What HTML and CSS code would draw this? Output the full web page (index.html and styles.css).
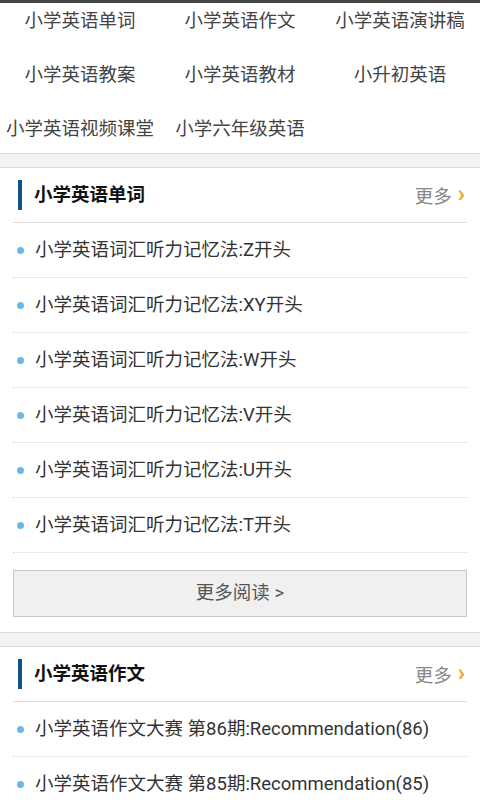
FILE: index.html
```html
<!DOCTYPE html>
<html lang="zh-CN">
<head>
<meta charset="utf-8">
<title>小学英语</title>
<link rel="stylesheet" href="styles.css">
</head>
<body>
<div class="page">
  <nav class="nav">
    <a class="nav-item">小学英语单词</a>
    <a class="nav-item">小学英语作文</a>
    <a class="nav-item">小学英语演讲稿</a>
    <a class="nav-item">小学英语教案</a>
    <a class="nav-item">小学英语教材</a>
    <a class="nav-item">小升初英语</a>
    <a class="nav-item">小学英语视频课堂</a>
    <a class="nav-item">小学六年级英语</a>
  </nav>
  <div class="band"></div>
  <section class="section">
    <div class="sec-head">
      <h2 class="sec-title">小学英语单词</h2>
      <a class="more">更多<span class="chev">›</span></a>
    </div>
    <ul class="list">
      <li class="item">小学英语词汇听力记忆法:Z开头</li>
      <li class="item">小学英语词汇听力记忆法:XY开头</li>
      <li class="item">小学英语词汇听力记忆法:W开头</li>
      <li class="item">小学英语词汇听力记忆法:V开头</li>
      <li class="item">小学英语词汇听力记忆法:U开头</li>
      <li class="item">小学英语词汇听力记忆法:T开头</li>
    </ul>
    <div class="btn">更多阅读 &gt;</div>
  </section>
  <div class="band"></div>
  <section class="section">
    <div class="sec-head">
      <h2 class="sec-title">小学英语作文</h2>
      <a class="more">更多<span class="chev">›</span></a>
    </div>
    <ul class="list">
      <li class="item">小学英语作文大赛 第86期:Recommendation(86)</li>
      <li class="item">小学英语作文大赛 第85期:Recommendation(85)</li>
    </ul>
  </section>
</div>
</body>
</html>
```

FILE: styles.css
```css
html, body {
  margin: 0;
  padding: 0;
  background: #fff;
}
body {
  font-family: Roboto, "Noto Sans CJK SC", sans-serif;
  color: #333;
  overflow: hidden;
}
.page {
  border-top: 3px solid #444;
}
.nav {
  display: grid;
  grid-template-columns: repeat(3, 160px);
  grid-auto-rows: 54px;
  margin-top: -11px;
}
.nav-item {
  display: flex;
  align-items: center;
  justify-content: center;
  font-size: 18.5px;
  color: #444;
  white-space: nowrap;
}
.band {
  height: 13px;
  background: #f3f3f3;
  border-top: 1px solid #dcdcdc;
  border-bottom: 1px solid #dcdcdc;
}
.nav + .band { margin-top: -1px; }
.section {
  padding: 0 13px;
}
.sec-head {
  display: flex;
  align-items: center;
  justify-content: space-between;
  height: 54px;
  border-bottom: 1px solid #dcdcdc;
}
.sec-title {
  margin: 0 0 0 5px;
  padding-left: 12px;
  border-left: 4px solid #155189;
  height: 30px;
  line-height: 30px;
  font-size: 18.5px;
  font-weight: bold;
  color: #111;
}
.more {
  font-size: 18.5px;
  color: #888;
  margin-right: 2px;
  display: flex;
  align-items: center;
}
.chev {
  color: #f7a21b;
  font-weight: bold;
  font-size: 24px;
  margin-left: 6px;
  line-height: 1;
  position: relative;
  top: -1px;
}
.list {
  list-style: none;
  margin: 0;
  padding: 0;
}
.item {
  position: relative;
  display: flex;
  align-items: center;
  height: 54px;
  padding-left: 22px;
  font-size: 18.5px;
  line-height: 24px;
  color: #333;
  border-bottom: 1px dotted #d6d6d6;
  white-space: nowrap;
}
.item::before {
  content: "";
  position: absolute;
  left: 4px;
  top: 24px;
  width: 7px;
  height: 7px;
  border-radius: 50%;
  background: #6db7e6;
}
.btn {
  margin: 17px 0 15px;
  height: 45px;
  line-height: 45px;
  text-align: center;
  background: #f0f0f0;
  border: 1px solid #c9c9c9;
  font-size: 18.5px;
  color: #555;
}
```
